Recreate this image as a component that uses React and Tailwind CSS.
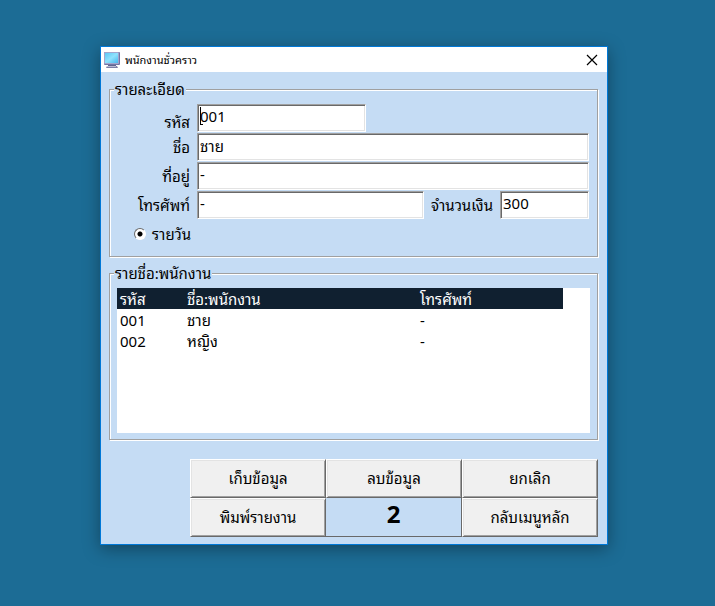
import React, { useState } from 'react';

const employees = [
  { id: '001', name: 'ชาย', phone: '-' },
  { id: '002', name: 'หญิง', phone: '-' },
];

const labelClass = 'w-20 whitespace-nowrap text-right text-[15px] leading-5';

const inputClass =
  'h-7 min-w-0 bg-white px-0.5 pb-1 text-[15px] leading-5 rounded-none outline-none border border-t-[#a0a0a0] border-l-[#a0a0a0] border-r-white border-b-white shadow-[inset_1px_1px_#696969,inset_-1px_-1px_#e3e3e3]';

const buttonClass =
  'bg-[#f0f0f0] text-[15px] border border-t-white border-l-white border-r-[#696969] border-b-[#696969] shadow-[inset_1px_1px_#e3e3e3,inset_-1px_-1px_#a0a0a0] active:bg-[#e5e5e5]';

const groupClass =
  'min-w-0 border border-[#a0a0a0] shadow-[inset_1px_1px_#fff,1px_1px_#fff]';

const legendClass = 'bg-[#c5dcf4] px-px text-[15px] leading-5';

const MonitorIcon = () => (
  <svg width="16" height="16" viewBox="0 0 16 16" aria-hidden="true">
    <defs>
      <linearGradient id="screen" x1="0" y1="0" x2="1" y2="1">
        <stop offset="0" stopColor="#5cc8f5" />
        <stop offset="0.5" stopColor="#8fe2fd" />
        <stop offset="1" stopColor="#45b8ee" />
      </linearGradient>
    </defs>
    <rect x="0" y="0" width="16" height="13" rx="1" fill="#7376a6" />
    <rect x="0" y="0" width="15" height="12" rx="1" fill="#a3a6cc" />
    <rect x="1" y="1" width="13" height="10" fill="url(#screen)" />
    <path d="M4 13h8v1H4z" fill="#62658f" />
    <path d="M3 14h10l1 2H2z" fill="#7c7fa6" />
    <path d="M3 14h9v1H3z" fill="#b9bbd6" />
  </svg>
);

const TextCaret = () => (
  <svg className="pointer-events-none absolute left-[3px] top-[3px]" width="3" height="18" viewBox="0 0 3 18" aria-hidden="true">
    <path d="M0 0h1v18H0zM1 17h2v1H1z" fill="#000" />
  </svg>
);

const App = () => {
  const [form, setForm] = useState({
    id: '001',
    name: 'ชาย',
    address: '-',
    phone: '-',
    amount: '300',
  });

  const handleChange = (e) => {
    const { name, value } = e.target;
    setForm((prevState) => ({ ...prevState, [name]: value }));
  };

  return (
    <div className="min-h-screen bg-[#1c6c95] pt-[46px] pb-10 pl-[100px] pr-[107px] text-black font-['Noto_Sans','Noto_Sans_Thai_Looped','Loma','Waree','Noto_Sans_Thai',sans-serif]">
      <main className="border border-[#0078d7] bg-[#c5dcf4] shadow-[0_4px_16px_rgba(0,0,0,0.35)]">
        <header className="flex h-[25px] items-center bg-white pl-[3px] pr-[5px]">
          <MonitorIcon />
          <h1 className="ml-[5px] flex-1 text-[11px] leading-5">พนักงานชั่วคราว</h1>
          <button type="button" aria-label="ปิด" className="p-1">
            <svg width="12" height="12" viewBox="0 0 12 12" aria-hidden="true">
              <path d="M1 1l10 10M11 1L1 11" stroke="#000" strokeWidth="1.2" fill="none" />
            </svg>
          </button>
        </header>

        <form className="pt-[7px] pb-[7px] pl-2 pr-[9px]" onSubmit={(e) => e.preventDefault()}>
          <fieldset className={`${groupClass} pr-2 pb-3`}>
            <legend className={`${legendClass} ml-1`}>รายละเอียด</legend>
            <div className="flex flex-col gap-px pt-[5px]">
              <div className="flex items-end gap-[7px]">
                <label htmlFor="id" className={labelClass}>รหัส</label>
                <div className="relative flex w-[169px]">
                  <input id="id" name="id" value={form.id} onChange={handleChange} className={`${inputClass} flex-1`} />
                  <TextCaret />
                </div>
              </div>
              <div className="flex items-center gap-[7px]">
                <label htmlFor="name" className={labelClass}>ชื่อ</label>
                <input id="name" name="name" value={form.name} onChange={handleChange} className={`${inputClass} flex-1`} />
              </div>
              <div className="flex items-center gap-[7px]">
                <label htmlFor="address" className={labelClass}>ที่อยู่</label>
                <input id="address" name="address" value={form.address} onChange={handleChange} className={`${inputClass} flex-1`} />
              </div>
              <div className="flex items-center gap-[7px]">
                <label htmlFor="phone" className={labelClass}>โทรศัพท์</label>
                <input id="phone" name="phone" value={form.phone} onChange={handleChange} className={`${inputClass} flex-1`} />
                <label htmlFor="amount" className="whitespace-nowrap text-right text-[15px] leading-5">จำนวนเงิน</label>
                <input id="amount" name="amount" value={form.amount} onChange={handleChange} className={`${inputClass} w-[89px]`} />
              </div>
            </div>
            <div className="mt-[5px] flex items-center pl-6">
              <input
                type="radio"
                id="daily"
                name="payType"
                defaultChecked
                className="size-3 appearance-none rounded-full border border-t-[#696969] border-l-[#696969] border-r-white border-b-white bg-white checked:bg-[radial-gradient(circle,#000_2px,#fff_3px)]"
              />
              <label htmlFor="daily" className="ml-1.5 text-[15px] leading-5">รายวัน</label>
            </div>
          </fieldset>

          <fieldset className={`${groupClass} mt-1.5 px-[7px] pt-[5px] pb-1.5`}>
            <legend className={`${legendClass} -ml-[3px]`}>รายชื่อ:พนักงาน</legend>
            <div className="min-h-[145px] bg-white pr-[27px]">
              <table className="w-full table-fixed border-collapse text-left text-[15px]">
                <thead>
                  <tr className="h-[21px] bg-[#102030] text-white">
                    <th className="w-[67px] p-0 pl-[3px] font-normal leading-5">รหัส</th>
                    <th className="w-[233px] p-0 pl-[3px] font-normal leading-5">ชื่อ:พนักงาน</th>
                    <th className="p-0 pl-[3px] font-normal leading-5">โทรศัพท์</th>
                  </tr>
                </thead>
                <tbody>
                  {employees.map((emp) => (
                    <tr key={emp.id} className="h-[21px]">
                      <td className="p-0 pl-[3px] leading-5">{emp.id}</td>
                      <td className="p-0 pl-[3px] leading-5">{emp.name}</td>
                      <td className="p-0 pl-[3px] leading-5">{emp.phone}</td>
                    </tr>
                  ))}
                </tbody>
              </table>
            </div>
          </fieldset>

          <div className="mt-[19px] ml-[81px] grid auto-rows-[39px] grid-cols-3">
            <button type="button" className={buttonClass}>เก็บข้อมูล</button>
            <button type="button" className={buttonClass}>ลบข้อมูล</button>
            <button type="button" className={buttonClass}>ยกเลิก</button>
            <button type="button" className={buttonClass}>พิมพ์รายงาน</button>
            <output className="border-r border-b border-[#696969] text-center text-2xl leading-8 font-bold">
              {employees.length}
            </output>
            <button type="button" className={buttonClass}>กลับเมนูหลัก</button>
          </div>
        </form>
      </main>
    </div>
  );
};

export default App;
